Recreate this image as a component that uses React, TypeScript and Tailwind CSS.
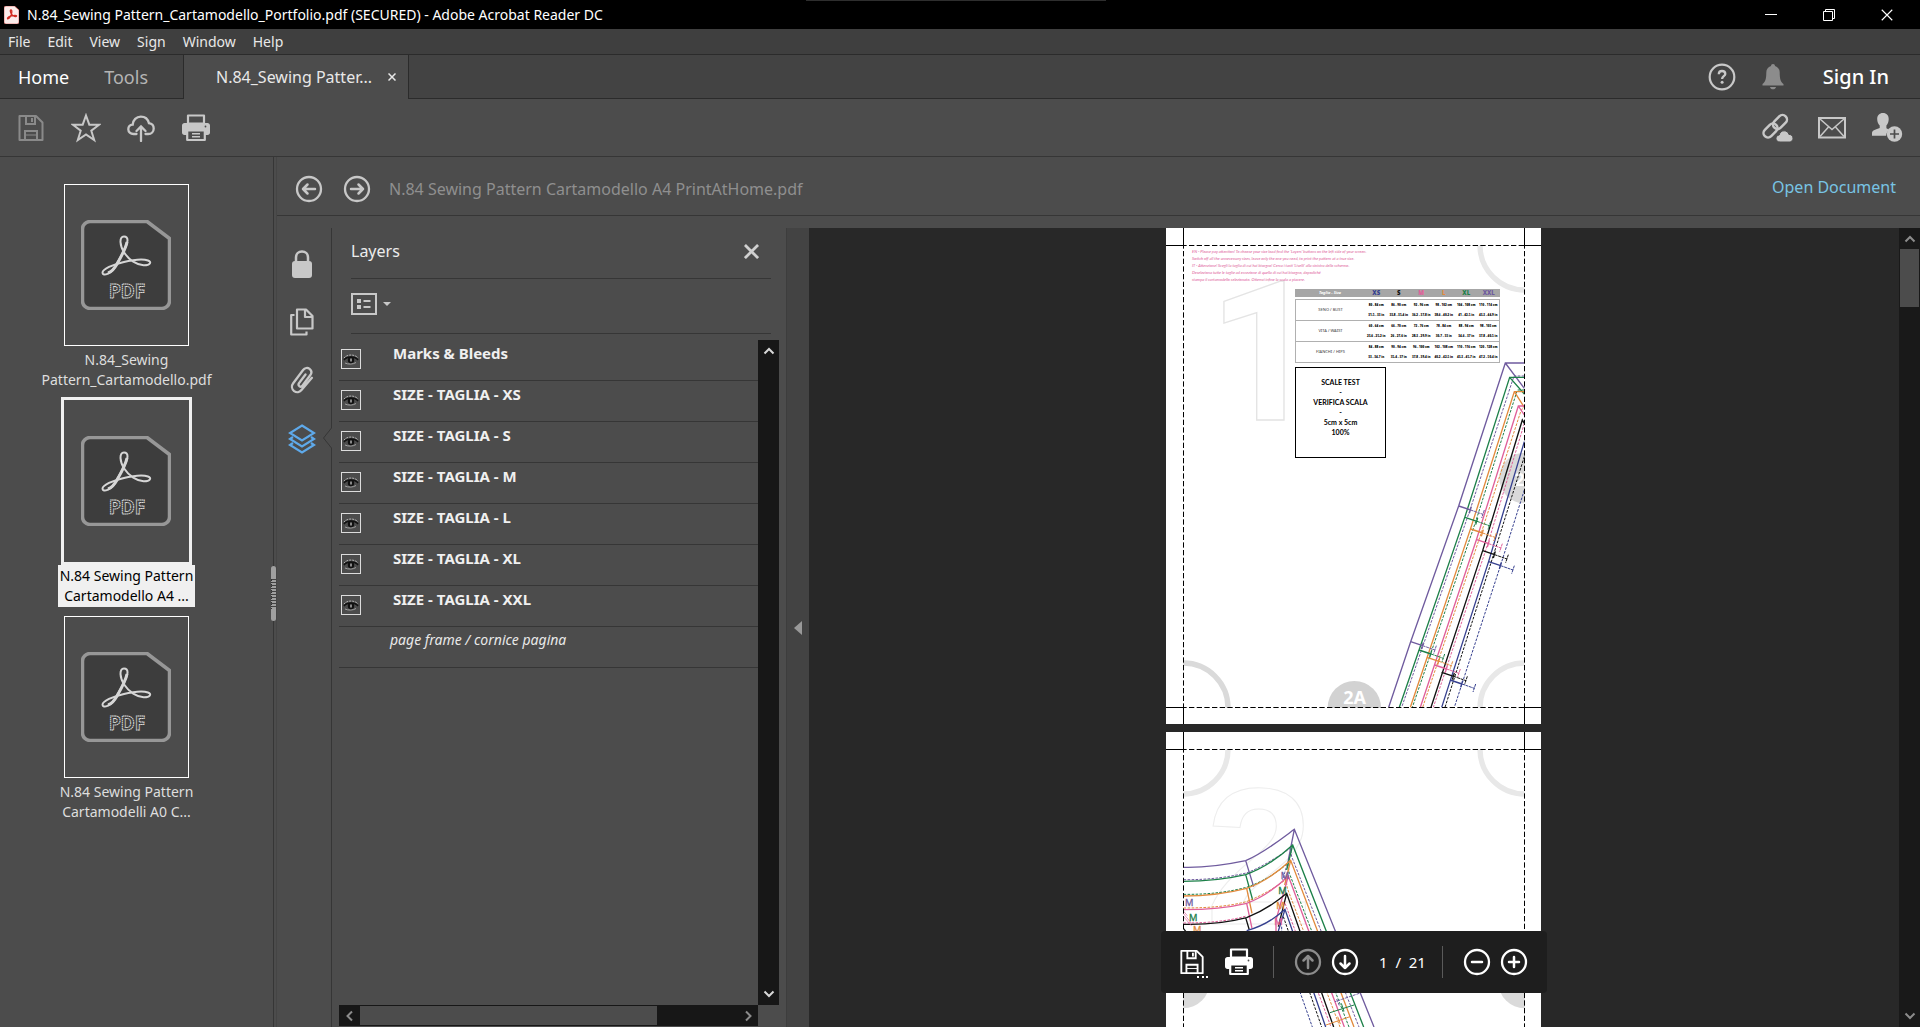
import type { ReactNode } from "react";

type IconProps = { className?: string };

const PURPLE = "#6f5b9e";
const GREEN = "#1d8049";
const ORANGE = "#e28a3c";
const PINK = "#e0609a";
const BLACK = "#111111";
const BLUE = "#36408f";

const files = [
  { lines: ["N.84_Sewing", "Pattern_Cartamodello.pdf"], selected: false },
  { lines: ["N.84 Sewing Pattern", "Cartamodello A4 ..."], selected: true },
  { lines: ["N.84 Sewing Pattern", "Cartamodelli A0 C..."], selected: false },
];

const layers = [
  "Marks & Bleeds",
  "SIZE - TAGLIA - XS",
  "SIZE - TAGLIA - S",
  "SIZE - TAGLIA - M",
  "SIZE - TAGLIA - L",
  "SIZE - TAGLIA - XL",
  "SIZE - TAGLIA - XXL",
];

const sizes = [
  { name: "XS", color: BLUE },
  { name: "S", color: BLACK },
  { name: "M", color: PINK },
  { name: "L", color: ORANGE },
  { name: "XL", color: GREEN },
  { name: "XXL", color: PURPLE },
];

const measures = [
  {
    name: "SENO / BUST",
    cm: ["80 - 84 cm", "86 - 90 cm", "92 - 96 cm", "98 - 102 cm", "104 - 108 cm", "110 - 114 cm"],
    inch: ["31,5 - 33 in", "33,8 - 35,4 in", "36,2 - 37,8 in", "38,6 - 40,2 in", "41 - 42,5 in", "43,3 - 44,9 in"],
  },
  {
    name: "VITA / WAIST",
    cm: ["60 - 64 cm", "66 - 70 cm", "72 - 76 cm", "78 - 84 cm", "88 - 94 cm", "98 - 103 cm"],
    inch: ["23,6 - 25,2 in", "26 - 27,6 in", "28,3 - 29,9 in", "30,7 - 33 in", "34,6 - 37 in", "37,8 - 40,5 in"],
  },
  {
    name: "FIANCHI / HIPS",
    cm: ["84 - 88 cm", "90 - 94 cm", "96 - 100 cm", "102 - 108 cm", "110 - 116 cm", "120 - 128 cm"],
    inch: ["33 - 34,7 in", "35,4 - 37 in", "37,8 - 39,4 in", "40,2 - 42,5 in", "43,3 - 45,7 in", "47,2 - 50,4 in"],
  },
];

const notes = [
  "EN - Please pay attention! To choose your size load find the 'Layers' buttons on the left side of your screen.",
  "Switch off all the unnecessary sizes, leave only the one you need, to print the pattern at a true size.",
  "IT - Attenzione! Scegli la taglia di cui hai bisogno! Cerca i tasti 'Livelli' alla sinistra dello schermo.",
  "Deseleziona tutte le taglie ad eccezione di quella di cui hai bisogno, dopodiché",
  "stampa il cartamodello selezionato. Otterrai infine la scala a piacere.",
];

/* ---------- icons ---------- */

const SaveIcon = ({ className }: IconProps) => (
  <svg className={className} viewBox="0 0 28 28" fill="none" stroke="currentColor" strokeWidth="2">
    <path d="M2.500 2h16.500l6.500 6.500V26h-23z" strokeLinejoin="round" />
    <path d="M9 2v8h9V2M15 4v4M8 26V17h12v9" />
    <path d="M8 21h12" strokeWidth="1" />
  </svg>
);

const StarIcon = ({ className }: IconProps) => (
  <svg className={className} viewBox="0 0 30 30" fill="none" stroke="currentColor" strokeWidth="2">
    <path d="M15 2.500l3.300 9.200h9.800l-7.800 6 2.900 9.300L15 21.500 6.800 27l2.900-9.300-7.800-6h9.800z" />
  </svg>
);

const CloudUpIcon = ({ className }: IconProps) => (
  <svg className={className} viewBox="0 0 28 28" fill="none" stroke="currentColor" strokeWidth="2.300" strokeLinecap="round">
    <path d="M9.500 20H6.500C3.500 20 1.300 18 1.300 15.300c0-2.600 1.900-4.500 4.400-4.700C6 6 9.400 2.600 13.800 2.600c4 0 7.200 2.600 8.100 6.500 2.800.4 4.800 2.600 4.800 5.300 0 3.100-2.300 5.600-5.500 5.600h-2.700" />
    <path d="M14 27V13M9.500 17l4.500-4.500 4.500 4.500" />
  </svg>
);

const PrintIcon = ({ className }: IconProps) => (
  <svg className={className} viewBox="0 0 28 28">
    <path d="M6 1.500h16v8H6z" fill="none" stroke="currentColor" strokeWidth="2.200" strokeLinejoin="round" />
    <path d="M2.500 9h23c1.300 0 2.500 1.200 2.500 2.500v7c0 1.300-1 2.500-2.500 2.500H23v-5H5v5H2.500C1 21 0 19.800 0 18.500v-7C0 10.200 1.200 9 2.500 9z" fill="currentColor" />
    <path d="M5.200 16.500h17.600V26H5.200z" fill="none" stroke="currentColor" strokeWidth="2.200" strokeLinejoin="round" />
    <path d="M10 19.700h8M10 22.800h8" stroke="currentColor" strokeWidth="1.500" />
    <circle cx="23.500" cy="12.500" r=".9" fill="#4c4c4c" />
  </svg>
);

const HelpIcon = ({ className }: IconProps) => (
  <svg className={className} viewBox="0 0 28 28" fill="none" stroke="currentColor">
    <circle cx="14" cy="14" r="12.300" strokeWidth="2.200" />
    <path d="M10.800 11.200c0-2 1.300-3.200 3.200-3.200s3.300 1.100 3.300 2.900c0 2.200-3.200 2.500-3.200 5" strokeWidth="2.300" />
    <circle cx="14.100" cy="19.200" r="1.500" fill="currentColor" stroke="none" />
  </svg>
);

const BellIcon = ({ className }: IconProps) => (
  <svg className={className} viewBox="0 0 24 26" fill="currentColor">
    <path d="M12 0c1.200 0 2 .8 2 2 3 .8 4.700 3.400 4.700 6.500 0 6.500 1 9.500 3.800 11.500v1.500h-21V20c2.800-2 3.800-5 3.800-11.500C5.300 5.400 7 2.800 10 2c0-1.200.8-2 2-2zM9 23h6c-.3 1.500-1.500 2.300-3 2.300S9.300 24.500 9 23z" />
  </svg>
);

const LinkCloudIcon = ({ className }: IconProps) => (
  <svg className={className} viewBox="0 0 32 30" fill="none" stroke="currentColor" strokeWidth="2.500">
    <rect x="11" y="4.500" width="16" height="9" rx="4.500" transform="rotate(-45 19 9)" />
    <rect x="1.500" y="13" width="16" height="9" rx="4.500" transform="rotate(-45 9.500 17.500)" />
    <path d="M19 29c-2.500 0-4-1.500-4-3.500s1.300-3.300 3.200-3.500c.5-2.600 2.400-4.200 4.900-4.200 2.300 0 4.200 1.400 4.800 3.600 2.400 0 4.100 1.600 4.100 3.800S30.500 29 28.300 29z" fill="currentColor" stroke="#4c4c4c" strokeWidth="1" />
  </svg>
);

const MailIcon = ({ className }: IconProps) => (
  <svg className={className} viewBox="0 0 30 24" fill="none" stroke="currentColor">
    <rect x="2" y="2" width="26" height="19.500" strokeWidth="2" />
    <path d="M3 3l12 10.500L27 3M3 20.500l8.500-9.500M27 20.500L18.500 11" strokeWidth="1.500" />
  </svg>
);

const AddUserIcon = ({ className }: IconProps) => (
  <svg className={className} viewBox="0 0 32 30" fill="currentColor">
    <path d="M12 0c3.600 0 5.700 2.500 5.700 6 0 2.700-.9 5-2.300 6.500v2.700l3 1.500c-2 1.600-3.200 3.500-3.200 6H1v-2.500C1 17 5.200 16.500 8.700 15v-2.500C7.200 11 6.200 8.700 6.200 6c0-3.500 2.200-6 5.800-6z" />
    <circle cx="23.500" cy="21" r="7.700" />
    <path d="M23.500 16.500v9M19 21h9" stroke="#4c4c4c" strokeWidth="1.700" />
  </svg>
);

const CircleIcon = ({ className, d }: IconProps & { d: string }) => (
  <svg className={className} viewBox="0 0 28 28" fill="none" stroke="currentColor" strokeWidth="2.300" strokeLinecap="round" strokeLinejoin="round">
    <circle cx="14" cy="14" r="12" />
    <path d={d} strokeWidth="2.500" />
  </svg>
);

const Chevron = ({ className, d }: IconProps & { d: string }) => (
  <svg className={className} viewBox="0 0 12 12" fill="none" stroke="currentColor" strokeWidth="2">
    <path d={d} />
  </svg>
);

const CrossIcon = ({ className, width = 3 }: IconProps & { width?: number }) => (
  <svg className={className} viewBox="0 0 16 16" fill="none" stroke="currentColor" strokeWidth={width}>
    <path d="M1 1l14 14M15 1L1 15" />
  </svg>
);

const LockIcon = () => (
  <svg className="h-7 w-5" viewBox="0 0 20 28">
    <rect x="0" y="11" width="20" height="17" rx="3" fill="currentColor" />
    <path d="M4 12V7.500C4 4 6.500 1.500 10 1.500S16 4 16 7.500V12" fill="none" stroke="currentColor" strokeWidth="2.500" />
  </svg>
);

const PagesIcon = () => (
  <svg className="h-7 w-6" viewBox="0 0 24 28" fill="none" stroke="currentColor" strokeWidth="2.200" strokeLinejoin="round">
    <path d="M7 1.500h9l6.500 6.500v12.500H7z" />
    <path d="M15 2v7h7M4.500 7H1.200v19.500h15.300V23.500" />
  </svg>
);

const ClipIcon = () => (
  <svg className="h-7 w-6" viewBox="0 0 24 28" fill="none" stroke="currentColor" strokeWidth="2.300" strokeLinecap="round">
    <path d="M15.500 8.500l-6.200 8.300c-1 1.300-.8 2.700.1 3.400 1 .7 2.300.5 3.200-.7l7.600-10.200c1.700-2.300 1.300-4.900-.6-6.400-2-1.500-4.800-1.100-6.500 1.100L3.200 17.200c-1.900 2.600-1.500 6 .9 7.900 2.500 1.800 5.700 1.300 7.600-1.300l10.200-12" />
  </svg>
);

const LayersIcon = () => (
  <svg className="h-[30px] w-7" viewBox="0 0 28 30" fill="none" stroke="currentColor" strokeWidth="2.200">
    <path d="M14 1.500L26 9 14 16.500 2 9z" />
    <path d="M5 13l-3 2 12 7.500L26 15l-3-2M5 19l-3 2 12 7.500L26 21l-3-2" />
  </svg>
);

const OptionsIcon = () => (
  <svg className="h-[22px] w-[26px]" viewBox="0 0 26 22" fill="none" stroke="currentColor">
    <rect x="1" y="1" width="24" height="20" strokeWidth="2" />
    <path d="M6 8h4M6 14h4" strokeWidth="4" />
    <path d="M12.500 8h7M12.500 14h7" strokeWidth="2" />
  </svg>
);

const EyeIcon = () => (
  <svg className="h-[14px] w-4" viewBox="0 0 16 14" fill="none">
    <path d="M1 6c3-4 11-4 14 0" stroke="#b5b5b5" strokeDasharray="2 1" />
    <path d="M1 8c3-4 11-4 14 0" stroke="#111" strokeWidth="1.500" />
    <path d="M2 11c3 1.500 8 1.500 11-.5" stroke="#a0a0a0" />
    <circle cx="8" cy="8" r="3.200" fill="#111" />
    <path d="M8 6.500v3" stroke="#fff" />
  </svg>
);

const PdfIcon = () => (
  <svg className="h-[90px] w-[90px]" viewBox="0 0 90 90" aria-hidden="true">
    <path d="M9 1.500h57l22.500 17V81c0 4-3.500 7.500-7.500 7.500H9c-4 0-7.500-3.500-7.500-7.500V9c0-4 3.500-7.500 7.500-7.500z" fill="#3d3d3d" stroke="#979797" strokeWidth="3.500" strokeLinejoin="round" />
    <g fill="none" stroke="#d6d6d6" strokeWidth="2">
      <path d="M43 16.500c-5 0-4.500 9 .5 16.500 4.500 7 12.500 12 19 12.300 7 .2 8.500-3.500 4.500-4.800-6-2-16.500-.3-25 1.700-10 2.300-20.500 6.800-20.500 10.600 0 3.400 8.500 2.200 14-8.300 5-9 11-19 11-24.300 0-2.300-1.500-3.700-3.500-3.700z" />
      <path d="M46 22c-1 6-6 15-10 22-2.500 4.500-5.500 8-9 9" strokeWidth="3" />
    </g>
    <text x="46" y="77.500" textAnchor="middle" fontSize="19" fontWeight="700" fontFamily="Noto Sans, sans-serif" fill="none" stroke="#e0e0e0" strokeWidth=".9" strokeDasharray="1.500 .5">
      PDF
    </text>
  </svg>
);

/* ---------- window chrome ---------- */

const IconButton = ({ label, className, children }: { label: string; className?: string; children: ReactNode }) => (
  <button type="button" aria-label={label} className={`flex items-center justify-center ${className ?? ""}`}>
    {children}
  </button>
);

const TitleBar = () => (
  <header className="relative flex h-[29px] shrink-0 items-center bg-black pr-1 text-white">
    <span className="absolute top-0 left-[42%] h-px w-[300px] bg-[#2e2e2e]" />
    <svg className="ml-1 h-[18px] w-[15px]" viewBox="0 0 15 18">
      <path d="M2 0h8.500L15 4v12c0 1.200-.8 2-2 2H2c-1.200 0-2-.8-2-2V2C0 .8.800 0 2 0z" fill="#fbeceb" stroke="#d8443c" strokeWidth=".6" />
      <path d="M7 4c-1.500 0-.3 3 1 4.700 1.300 1.600 4 2.500 4.500 1.500.5-1.200-3-.8-5-.3-2.200.6-4.500 1.700-4 2.700.7 1 2.700-1.500 3.600-3.600C7.900 7 8.300 4 7 4z" fill="none" stroke="#d12d25" strokeWidth="1.300" />
    </svg>
    <h1 className="ml-2 flex-1 text-sm">
      N.84_Sewing Pattern_Cartamodello_Portfolio.pdf (SECURED) - Adobe Acrobat Reader DC
    </h1>
    <IconButton label="Minimize" className="h-full w-[58px]">
      <svg className="h-3 w-3" viewBox="0 0 12 12"><path d="M0 5.500h12" stroke="currentColor" /></svg>
    </IconButton>
    <IconButton label="Restore" className="h-full w-[58px]">
      <svg className="h-3 w-3" viewBox="0 0 12 12" fill="none" stroke="currentColor">
        <path d="M.5 2.500h9v9h-9zM2.500 2.500v-2h9v9h-2" />
      </svg>
    </IconButton>
    <IconButton label="Close" className="h-full w-[58px]">
      <CrossIcon className="h-3 w-3" width={1.5} />
    </IconButton>
  </header>
);

const MenuBar = () => (
  <nav className="flex h-[26px] shrink-0 items-center gap-[17px] border-b border-[#2b2b2b] bg-[#3f3f3f] pl-2 text-sm text-[#e8e8e8]">
    {["File", "Edit", "View", "Sign", "Window", "Help"].map((item) => (
      <button key={item} type="button">{item}</button>
    ))}
  </nav>
);

const TabBar = () => (
  <div className="flex h-11 shrink-0 bg-[#434343]">
    <div className="flex w-[183px] items-center gap-[35px] border-b border-[#2b2b2b] pl-[18px] text-lg">
      <button type="button" className="text-white">Home</button>
      <button type="button" className="text-[#b4b4b4]">Tools</button>
    </div>
    <div className="flex w-[226px] items-center border-x border-[#2b2b2b] bg-[#4c4c4c] pl-8 text-base text-[#e8e8e8]">
      <span className="w-[162px] whitespace-nowrap">N.84_Sewing Patter...</span>
      <IconButton label="Close tab" className="ml-2.5">
        <CrossIcon className="h-2 w-2" />
      </IconButton>
    </div>
    <div className="flex flex-1 items-center justify-end border-b border-[#2b2b2b] pr-[31px] text-[#c8c8c8]">
      <IconButton label="Help">
        <HelpIcon className="h-7 w-7" />
      </IconButton>
      <IconButton label="Notifications" className="ml-[25px] text-[#8c8c8c]">
        <BellIcon className="h-[26px] w-6" />
      </IconButton>
      <button type="button" className="ml-[38px] text-xl font-medium text-white">Sign In</button>
    </div>
  </div>
);

const Toolbar = () => (
  <div className="flex h-[58px] shrink-0 items-center border-b border-[#363636] pr-1.5 pl-[3px] text-[#c8c8c8]">
    <IconButton label="Save" className="w-[55px] text-[#8a8a8a]"><SaveIcon className="h-7 w-7" /></IconButton>
    <IconButton label="Star file" className="w-[55px]"><StarIcon className="h-[30px] w-[30px]" /></IconButton>
    <IconButton label="Upload" className="w-[55px]"><CloudUpIcon className="h-7 w-7" /></IconButton>
    <IconButton label="Print" className="w-[55px]"><PrintIcon className="h-7 w-7" /></IconButton>
    <IconButton label="Share link" className="ml-auto w-[55px]"><LinkCloudIcon className="h-[30px] w-8" /></IconButton>
    <IconButton label="Send by email" className="w-[55px]"><MailIcon className="h-6 w-[30px]" /></IconButton>
    <IconButton label="Add people" className="w-[55px]"><AddUserIcon className="h-[30px] w-8" /></IconButton>
  </div>
);

const FileList = () => (
  <aside className="flex w-[273px] shrink-0 flex-col items-center pt-6 pr-5">
    {files.map(({ lines, selected }) => (
      <button key={lines[1]} type="button" className="mb-[6px] flex flex-col items-center text-sm leading-5">
        <span className={selected ? "border-[3px] border-[#f0f0f0]" : "p-[3px]"}>
          <span className={`flex h-[162px] w-[125px] items-center justify-center ${selected ? "" : "border border-white"}`}>
            <PdfIcon />
          </span>
        </span>
        <span className={`px-[2px] py-px ${selected ? "bg-[#f0f0f0] text-black" : "text-[#dedede]"}`}>
          {lines[0]}
          <br />
          {lines[1]}
        </span>
      </button>
    ))}
  </aside>
);

const Splitter = () => (
  <div className="relative w-1 shrink-0 border-x border-l-[#363636] border-r-[#454545]">
    <div className="absolute top-[409px] left-[-3px] flex h-[55px] w-[5px] items-center rounded-sm bg-[#a0a0a0]">
      <div className="h-[30px] w-full border-l border-dotted border-[#333] bg-[repeating-linear-gradient(#444_0_1px,#a0a0a0_1px_3px)]" />
    </div>
  </div>
);

const DocumentHeader = () => (
  <div className="flex h-[59px] shrink-0 items-center border-b border-[#363636] pt-1.5 pr-6 pl-[18px] text-base">
    <IconButton label="Previous document" className="text-[#c8c8c8]">
      <CircleIcon className="h-7 w-7" d="M20 14H8M12.500 9.500L8 14l4.500 4.500" />
    </IconButton>
    <IconButton label="Next document" className="ml-5 text-[#c8c8c8]">
      <CircleIcon className="h-7 w-7" d="M8 14h12M15.500 9.500L20 14l-4.500 4.500" />
    </IconButton>
    <span className="ml-[18px] text-[#8f8f8f]">N.84 Sewing Pattern Cartamodello A4 PrintAtHome.pdf</span>
    <a href="#open" className="ml-auto pb-1 text-[#78c4e4]">Open Document</a>
  </div>
);

const NavRail = () => (
  <nav className="relative flex w-[55px] shrink-0 flex-col items-center gap-[30px] border-r border-[#363636] pt-[22px] pr-1 text-[#c8c8c8]">
    <IconButton label="Security settings"><LockIcon /></IconButton>
    <IconButton label="Page thumbnails"><PagesIcon /></IconButton>
    <IconButton label="Attachments"><ClipIcon /></IconButton>
    <IconButton label="Layers" className="text-[#5ea9ea]"><LayersIcon /></IconButton>
    <svg className="absolute top-[200px] -right-px h-5 w-[9px] bg-[#4c4c4c]" viewBox="0 0 9 20" fill="none" stroke="#363636">
      <path d="M8.500 0L.5 10l8 10" />
    </svg>
  </nav>
);

const LayersPanel = () => (
  <section className="flex w-[454px] shrink-0 flex-col px-[7px]">
    <div className="mr-2 ml-3 flex h-[51px] items-center justify-between border-b border-[#363636] pr-3 pb-1">
      <h2 className="text-base text-[#ececec]">Layers</h2>
      <IconButton label="Close panel" className="text-[#d0d0d0]">
        <CrossIcon className="h-[15px] w-[15px]" />
      </IconButton>
    </div>
    <div className="mr-2 ml-3 flex h-[55px] items-center border-b border-[#363636] pb-1 text-[#c8c8c8]">
      <button type="button" aria-label="Layer options" className="flex items-center gap-[6px]">
        <OptionsIcon />
        <svg className="h-1 w-2" viewBox="0 0 8 4"><path d="M0 0h8L4 4z" fill="currentColor" /></svg>
      </button>
    </div>
    <div className="mt-[6px] flex min-h-0 flex-1">
      <ul className="min-w-0 flex-1">
        {layers.map((layer) => (
          <li key={layer} className="flex h-[41px] items-start border-b border-[#363636] pl-[2px]">
            <button type="button" aria-label={`Toggle ${layer}`} aria-pressed="true" className="mt-[9px] flex h-5 w-5 items-center justify-center border border-[#dcdcdc]">
              <EyeIcon />
            </button>
            <span className="ml-8 text-[15px] leading-[26px] font-bold text-[#f0f0f0]">{layer}</span>
          </li>
        ))}
        <li className="h-[41px] border-b border-[#363636] pl-[51px] text-sm leading-[26px] text-[#e8e8e8] italic">
          page frame / cornice pagina
        </li>
      </ul>
      <div className="flex w-[21px] flex-col items-center justify-between bg-[#171717] py-[5px] text-[#d8d8d8]">
        <IconButton label="Scroll up"><Chevron className="h-3 w-3" d="M1.500 8.500L6 4l4.500 4.500" /></IconButton>
        <IconButton label="Scroll down"><Chevron className="h-3 w-3" d="M1.500 3.500L6 8l4.500-4.500" /></IconButton>
      </div>
    </div>
    <div className="mr-[21px] mb-px flex h-[21px] items-center bg-[#171717] py-px text-[#8c8c8c]">
      <IconButton label="Scroll left" className="w-[21px]"><Chevron className="h-3 w-3" d="M8 1.500L3.500 6 8 10.500" /></IconButton>
      <div className="h-full w-[297px] bg-[#4c4c4c]" />
      <IconButton label="Scroll right" className="ml-auto w-[21px]"><Chevron className="h-3 w-3" d="M4 1.500L8.500 6 4 10.500" /></IconButton>
    </div>
  </section>
);

/* ---------- document pages, drawn at three units per pixel ---------- */

const PageFrame = ({ children }: { children?: ReactNode }) => (
  <svg className="absolute inset-0 h-full w-full" viewBox="0 0 1125 1488" fill="none">
    <defs>
      <clipPath id="frame">
        <path d="M51 51h1026v1389H51z" />
      </clipPath>
    </defs>
    <g clipPath="url(#frame)">{children}</g>
    <g stroke="#000" strokeWidth="3">
      <path d="M52.500 0V1488M1075.500 0V1488M0 52.500H1125M0 1438.500H1125" strokeDasharray="16 7" clipPath="url(#frame)" />
      <path d="M52.500 0v52.500H0M1075.500 0v52.500H1125M52.500 1488v-49.500H0M1075.500 1488v-49.500H1125" />
    </g>
  </svg>
);

const sideLines = [
  { color: PURPLE, line: "M523 69H466L326 498 182 905 116 1102M466 69L523 145", stitch: "M523 108H492L360 510 155 1102" },
  { color: GREEN, line: "M523 112H479L345 530 148 1102M479 112L523 162", stitch: "M523 150H502L377 545 187 1102" },
  { color: ORANGE, line: "M523 155H493L362 565 181 1102M493 155L523 202", stitch: "M523 195L512 215 395 575 218 1102" },
  { color: PINK, line: "M523 198H505L380 597 211 1102M505 198L523 225", stitch: "M523 250L414 610 250 1102" },
  { color: BLACK, line: "M523 250L517 240 398 632 243 1102", stitch: "M523 350L432 640 285 1102" },
  { color: BLUE, line: "M523 305L416 664 275 1102", stitch: "M523 450L452 675 313 1102" },
];

const notches = [
  [326, 498], [345, 532], [362, 567], [380, 599], [398, 632], [416, 665],
  [182, 905], [207, 930], [231, 952], [254, 975], [275, 997], [300, 1020],
];

const notchColors = [PURPLE, GREEN, ORANGE, PINK, BLACK, BLUE];

const SizeTable = () => (
  <table className="absolute top-[61px] left-[129px] w-[205px] table-fixed border-separate border-spacing-0 text-center text-[3px] leading-[10px] text-black">
    <thead>
      <tr className="h-2 bg-[#a6a6a6] leading-[8px]">
        <th className="w-[70px] p-0 text-[4px] text-white italic">Taglia - Size</th>
        {sizes.map(({ name, color }) => (
          <th key={name} className="p-0 text-[6px] font-black" style={{ color }}>{name}</th>
        ))}
      </tr>
    </thead>
    <tbody>
      <tr className="h-[3px]"><td colSpan={7} className="border-b border-[#b0b0b0] p-0 leading-[0px]" /></tr>
      {measures.map(({ name, cm, inch }) => (
        <tr key={name}>
          <th scope="row" className="border-b border-l border-[#b0b0b0] p-0 text-[4px] font-medium text-[#555]">{name}</th>
          {cm.map((value, i) => (
            <td key={value} className="border-b border-[#b0b0b0] p-0 font-black whitespace-nowrap last:border-r">
              {value}
              <br />
              {inch[i]}
            </td>
          ))}
        </tr>
      ))}
    </tbody>
  </table>
);

const PageOne = () => (
  <article className="relative h-[496px] w-[375px] shrink-0 overflow-hidden bg-white">
    <PageFrame>
      <g strokeWidth="16">
        <circle cx="1076" cy="52" r="134" stroke="#e8e8e8" />
        <circle cx="52" cy="1439" r="134" stroke="#dadada" />
        <circle cx="1076" cy="1439" r="134" stroke="#e8e8e8" />
      </g>
      <circle cx="565" cy="1439" r="80" fill="#d2d2d2" />
      <text x="566" y="1428" textAnchor="middle" fontSize="54" fontWeight="700" fontFamily="Noto Sans, sans-serif" fill="#fff">2A</text>
      <circle cx="1076" cy="750" r="76" fill="#d9d9d9" />
      <text x="1045" y="775" fontSize="54" fontWeight="700" fontFamily="Noto Sans, sans-serif" fill="#fff">2B</text>
      <text x="126" y="576" fontSize="582" fontWeight="700" fontFamily="Roboto, sans-serif" stroke="#e4e4e4" strokeWidth="4">1</text>
      <g transform="translate(552 336)">
        {sideLines.map(({ color, line, stitch }) => (
          <g key={color} stroke={color}>
            <path d={line} strokeWidth="4" />
            <path d={stitch} strokeWidth="3" strokeDasharray="8 4" />
          </g>
        ))}
        {notches.map(([x, y], i) => (
          <g key={`${x}-${y}`} stroke={notchColors[i % 6]} strokeWidth="4" transform={`translate(${x} ${y})`}>
            <path d="M0 0L36 12M38 2l-6 20" />
            <path d="M36 12l37 13M77 12l-8 24" strokeWidth="3" strokeDasharray="9 2" />
          </g>
        ))}
      </g>
    </PageFrame>
    <p className="absolute top-[20px] left-[26px] font-[Lato,sans-serif] text-[4px] leading-[7px] font-medium whitespace-nowrap text-[#e26aa2] italic">
      {notes.map((note) => (
        <span key={note} className="block">{note}</span>
      ))}
    </p>
    <SizeTable />
    <div className="absolute top-[139px] left-[129px] h-[91px] w-[91px] border border-black pt-[9px] text-center font-[Lato,sans-serif] text-[7px] leading-[10px] font-bold text-black">
      <p>SCALE TEST</p>
      <p>-</p>
      <p>VERIFICA SCALA</p>
      <p>-</p>
      <p>5cm x 5cm</p>
      <p>100%</p>
    </div>
  </article>
);

const curveLines = [
  {
    color: PURPLE,
    line: "M100 682C180 684 240 672 287 662C340 640 390 600 433 568L672 1161M287 662L311 740M433 568L415 660",
    stitch: "M100 719C180 720 240 710 289 699C340 680 390 645 421 625L425 650 627 1161M415 660L398 720",
  },
  {
    color: GREEN,
    line: "M100 724C180 724 240 715 287 704C340 685 390 650 428 615L641 1161M287 704L308 780M428 615L410 690",
    stitch: "M100 763C180 764 240 755 289 742C340 725 385 695 413 670L418 700 597 1161",
  },
  {
    color: ORANGE,
    line: "M100 768C180 768 240 758 290 745C340 728 385 695 422 661L612 1161M290 745L306 820M422 661L404 735",
    stitch: "M100 804C180 804 240 798 289 785C340 765 380 740 408 718L412 745 570 1161",
  },
  {
    color: PINK,
    line: "M100 809C180 809 240 802 290 790C340 772 380 742 415 708L583 1161M290 790L306 865M415 708L378 840V873",
    stitch: "M100 849C180 849 240 842 289 828M405 790L543 1161",
  },
  {
    color: BLACK,
    line: "M100 853C180 855 240 846 290 833C335 815 375 790 410 760L551 1161M287 833L298 870M410 760L385 860M100 865L112 880",
    stitch: "M400 830L515 1161",
  },
  {
    color: BLUE,
    line: "M290 872C335 860 370 840 405 808L527 1161M405 808L385 873",
    stitch: "M395 860V900L487 1161",
  },
];

const marks = [
  { x: 105, y: 798, color: PURPLE },
  { x: 117, y: 842, color: GREEN },
  { x: 129, y: 880, color: ORANGE },
  { x: 392, y: 716, color: PURPLE },
  { x: 385, y: 762, color: GREEN },
  { x: 379, y: 808, color: ORANGE },
  { x: 373, y: 854, color: PINK },
];

const PageTwo = () => (
  <article className="relative h-[496px] w-[375px] shrink-0 overflow-hidden bg-white">
    <PageFrame>
      <g strokeWidth="16" stroke="#e8e8e8">
        <circle cx="52" cy="52" r="134" />
        <circle cx="1076" cy="52" r="134" />
      </g>
      <circle cx="52" cy="750" r="79" fill="#dadada" />
      <circle cx="1076" cy="750" r="79" fill="#dadada" />
      <text x="118" y="576" fontSize="582" fontWeight="700" fontFamily="Liberation Sans, sans-serif" stroke="#ededed" strokeWidth="3">2</text>
      <g transform="translate(-48 -276)">
        {curveLines.map(({ color, line, stitch }) => (
          <g key={color} stroke={color} strokeWidth="4">
            <path d={line} />
            <path d={stitch} strokeWidth="3" strokeDasharray="8 4" />
          </g>
        ))}
        <path d="M100 813l12 14M100 820l24 30M100 829l24 28" stroke={PINK} strokeWidth="2" />
        <path d="M628 1060L555 1085M560 1077l8 20" stroke={PURPLE} strokeWidth="3" strokeDasharray="9 3" />
        <path d="M612 1095L540 1118M574 1090l8 24" stroke={GREEN} strokeWidth="3" />
        <path d="M600 1130L528 1155M563 1130l8 22" stroke={ORANGE} strokeWidth="3" />
        {marks.map(({ x, y, color }) => (
          <text key={y} x={x} y={y} fontSize="28" fontFamily="Open Sans, sans-serif" fill={color} stroke={color}>M</text>
        ))}
      </g>
    </PageFrame>
  </article>
);

const PageControls = () => (
  <div className="absolute bottom-[34px] left-1/2 flex h-[62px] w-[386px] -translate-x-1/2 items-center rounded-sm bg-[#1e1e1e] pl-[18px] text-white">
    <IconButton label="Save a copy" className="relative">
      <SaveIcon className="h-[26px] w-[26px]" />
      <span className="absolute right-[-3px] bottom-[-3px] w-[11px] border-b-2 border-dotted border-white" />
    </IconButton>
    <IconButton label="Print" className="ml-5"><PrintIcon className="h-7 w-7" /></IconButton>
    <span className="ml-5 h-8 w-px bg-[#5a5a5a]" />
    <IconButton label="Previous page" className="ml-5 text-[#8c8c8c]">
      <CircleIcon className="h-7 w-7" d="M14 20V8M9.500 12.500L14 8l4.500 4.500" />
    </IconButton>
    <IconButton label="Next page" className="ml-[9px]">
      <CircleIcon className="h-7 w-7" d="M14 8v12M9.500 15.500L14 20l4.500-4.500" />
    </IconButton>
    <span className="ml-5 w-[63px] text-[15px] whitespace-pre">1  /  21</span>
    <span className="h-8 w-px bg-[#5a5a5a]" />
    <IconButton label="Zoom out" className="ml-5"><CircleIcon className="h-7 w-7" d="M9 14h10" /></IconButton>
    <IconButton label="Zoom in" className="ml-[9px]"><CircleIcon className="h-7 w-7" d="M9 14h10M14 9v10" /></IconButton>
  </div>
);

const Viewer = () => (
  <main className="relative flex min-w-0 flex-1 flex-col items-center gap-2 overflow-hidden bg-[#282828] pr-px">
    <PageOne />
    <PageTwo />
    <PageControls />
  </main>
);

const App = () => {
  return (
    <div className="flex h-screen flex-col overflow-hidden bg-[#4c4c4c] font-['Noto_Sans',sans-serif]">
      <TitleBar />
      <MenuBar />
      <TabBar />
      <Toolbar />
      <div className="flex min-h-0 flex-1">
        <FileList />
        <Splitter />
        <div className="flex min-w-0 flex-1 flex-col">
          <DocumentHeader />
          <div className="flex min-h-0 flex-1 pt-3">
            <NavRail />
            <LayersPanel />
            <button type="button" aria-label="Collapse panel" className="flex w-[23px] shrink-0 items-center justify-center border-l border-[#3d3d3d] bg-[#434343] text-[#999]">
              <svg className="h-3.5 w-2" viewBox="0 0 8 14"><path d="M8 0v14L0 7z" fill="currentColor" /></svg>
            </button>
            <Viewer />
            <div className="flex w-[21px] shrink-0 flex-col items-center bg-[#191919] pb-[5px] text-[#8c8c8c]">
              <IconButton label="Scroll page up" className="h-[21px]"><Chevron className="h-3 w-3" d="M1.500 8.500L6 4l4.500 4.500" /></IconButton>
              <div className="h-[58px] w-[19px] bg-[#4c4c4c]" />
              <IconButton label="Scroll page down" className="mt-auto"><Chevron className="h-3 w-3" d="M1.500 3.500L6 8l4.500-4.500" /></IconButton>
            </div>
          </div>
        </div>
      </div>
    </div>
  );
};

export default App;
